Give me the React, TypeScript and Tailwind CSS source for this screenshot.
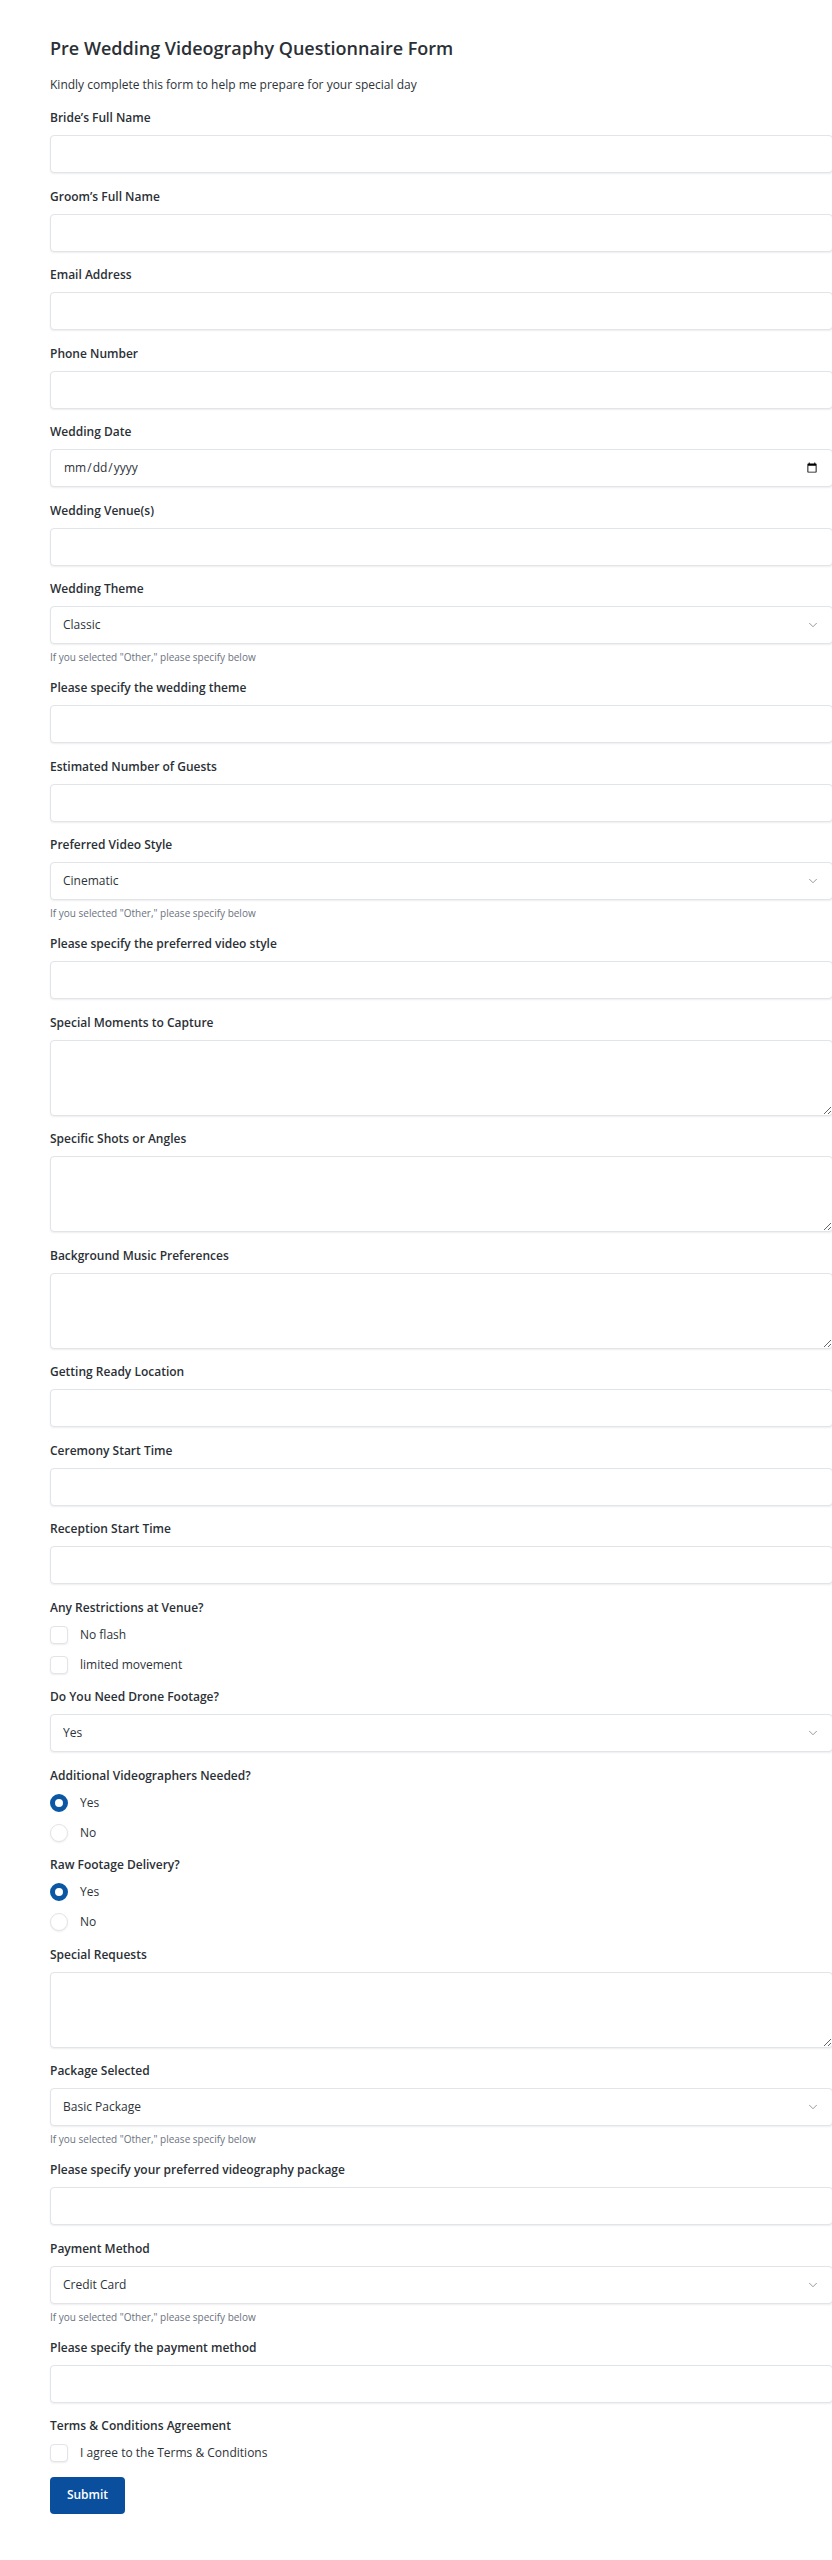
import React from 'react'
import { ChevronDown } from 'lucide-react'

const font = { fontFamily: '"Open Sans", "Noto Sans", Arial, sans-serif' }

const inputCls =
  'block w-full h-[38px] rounded-[4px] border border-[#e1e4e8] bg-white px-3 text-[12px] text-[#2d3339] shadow-[0_1px_2px_rgba(0,0,0,0.07)] outline-none'

const Label = ({ children }: { children: React.ReactNode }) => (
  <div className="mb-2 text-[12px] font-semibold leading-[18px] text-[#2b3036]">{children}</div>
)

const Helper = () => (
  <div className="mt-1.5 text-[10px] leading-[14px] text-[#6b7280]">If you selected "Other," please specify below</div>
)

const TextField = ({ label, type = 'text' }: { label: string; type?: string }) => (
  <div className="mb-[14.5px]">
    <Label>{label}</Label>
    <input type={type} className={inputCls} />
  </div>
)

const AreaField = ({ label }: { label: string }) => (
  <div className="mb-[14.5px]">
    <Label>{label}</Label>
    <textarea className="block w-full h-[76px] rounded-[4px] border border-[#e1e4e8] bg-white px-3 py-2 text-[12px] shadow-[0_1px_2px_rgba(0,0,0,0.07)] outline-none" />
  </div>
)

const SelectField = ({ label, value, options, helper = true }: {
  label: string
  value: string
  options: string[]
  helper?: boolean
}) => (
  <div className={helper ? 'mb-[15px]' : 'mb-[14.5px]'}>
    <Label>{label}</Label>
    <div className="relative">
      <select defaultValue={value} className={`${inputCls} appearance-none pr-8`}>
        {options.map(o => (
          <option key={o}>{o}</option>
        ))}
      </select>
      <ChevronDown className="pointer-events-none absolute right-[13px] top-[12px] h-[14px] w-[14px] text-[#7d848c]" strokeWidth={1.4} />
    </div>
    {helper && <Helper />}
  </div>
)

const CheckRow = ({ text }: { text: string }) => (
  <div className="flex h-[18px] items-center gap-3">
    <span className="h-[18px] w-[18px] rounded-[4px] border border-[#e1e4e8] bg-white shadow-[0_1px_2px_rgba(0,0,0,0.07)]"></span>
    <span className="text-[12px] text-[#2d3339]">{text}</span>
  </div>
)

const RadioRow = ({ text, checked }: { text: string; checked?: boolean }) => (
  <div className="flex h-[18px] items-center gap-3">
    {checked ? (
      <span className="h-[18px] w-[18px] rounded-full border-[5.5px] border-[#0b57a4] bg-white"></span>
    ) : (
      <span className="h-[18px] w-[18px] rounded-full border border-[#e1e4e8] bg-white shadow-[0_1px_2px_rgba(0,0,0,0.07)]"></span>
    )}
    <span className="text-[12px] text-[#2d3339]">{text}</span>
  </div>
)

const Group = ({ label, children }: { label: string; children: React.ReactNode }) => (
  <div className="mb-[14.5px]">
    <div className="mb-[9px] text-[12px] font-semibold leading-[18px] text-[#2b3036]">{label}</div>
    <div className="flex flex-col gap-3">{children}</div>
  </div>
)

export default function App() {
  return (
    <div className="min-h-screen w-full overflow-hidden bg-white" style={font}>
      <form className="w-[833px] pl-[50px] pt-[34px] pb-[40px]" onSubmit={e => e.preventDefault()}>
        <h1 className="text-[18px] font-semibold leading-[28px] text-[#2b3036]">Pre Wedding Videography Questionnaire Form</h1>
        <p className="mt-[14px] mb-[15px] text-[12px] leading-[18px] text-[#2d3339]">
          Kindly complete this form to help me prepare for your special day
        </p>

        <TextField label="Bride’s Full Name" />
        <TextField label="Groom’s Full Name" />
        <TextField label="Email Address" type="email" />
        <TextField label="Phone Number" type="tel" />
        <TextField label="Wedding Date" type="date" />
        <TextField label="Wedding Venue(s)" />
        <SelectField label="Wedding Theme" value="Classic" options={['Classic', 'Rustic', 'Modern', 'Bohemian', 'Other']} />
        <TextField label="Please specify the wedding theme" />
        <TextField label="Estimated Number of Guests" />
        <SelectField label="Preferred Video Style" value="Cinematic" options={['Cinematic', 'Documentary', 'Traditional', 'Other']} />
        <TextField label="Please specify the preferred video style" />
        <AreaField label="Special Moments to Capture" />
        <AreaField label="Specific Shots or Angles" />
        <AreaField label="Background Music Preferences" />
        <TextField label="Getting Ready Location" />
        <TextField label="Ceremony Start Time" />
        <TextField label="Reception Start Time" />

        <Group label="Any Restrictions at Venue?">
          <CheckRow text="No flash" />
          <CheckRow text="limited movement" />
        </Group>

        <SelectField label="Do You Need Drone Footage?" value="Yes" options={['Yes', 'No']} helper={false} />

        <Group label="Additional Videographers Needed?">
          <RadioRow text="Yes" checked />
          <RadioRow text="No" />
        </Group>

        <Group label="Raw Footage Delivery?">
          <RadioRow text="Yes" checked />
          <RadioRow text="No" />
        </Group>

        <AreaField label="Special Requests" />
        <SelectField label="Package Selected" value="Basic Package" options={['Basic Package', 'Standard Package', 'Premium Package', 'Other']} />
        <TextField label="Please specify your preferred videography package" />
        <SelectField label="Payment Method" value="Credit Card" options={['Credit Card', 'Bank Transfer', 'PayPal', 'Other']} />
        <TextField label="Please specify the payment method" />

        <Group label="Terms & Conditions Agreement">
          <CheckRow text="I agree to the Terms & Conditions" />
        </Group>

        <button type="submit" className="h-[37px] w-[75px] rounded-[4px] bg-[#0a4f9e] text-[12px] font-semibold text-white">
          Submit
        </button>
      </form>
    </div>
  )
}
